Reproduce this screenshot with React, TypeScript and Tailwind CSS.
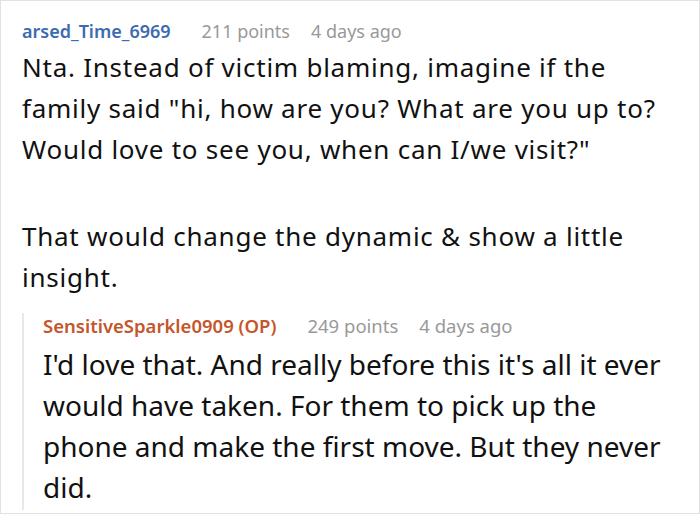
export default function App() {
  return (
    <div className="w-[700px] h-[520px] bg-white" style={{ fontFamily: '"Noto Sans", sans-serif' }}>
      <div className="w-[700px] h-[514px] border border-[#e2e2e2] pl-[21px] pt-[17px]">
        <div className="flex items-baseline text-[18px] leading-[26px]">
          <span className="font-semibold text-[#3d6bb0]">arsed_Time_6969</span>
          <span className="ml-[31px] text-[#999999]">211 points</span>
          <span className="ml-[21px] text-[#999999]">4 days ago</span>
        </div>
        <div className="mt-[3px] text-[26px] leading-[41px] tracking-[0.75px] text-[#111]">
          <p>Nta. Instead of victim blaming, imagine if the<br />family said "hi, how are you? What are you up to?<br />Would love to see you, when can I/we visit?"</p>
          <p className="mt-[46px]">That would change the dynamic &amp; show a little<br />insight.</p>
        </div>
        <div className="mt-[15px] border-l-2 border-[#e8e8e8] pl-[19px] pb-[2px]">
          <div className="flex items-baseline text-[18.5px] leading-[26px]">
            <span className="font-semibold text-[#c5562b]">SensitiveSparkle0909 (OP)</span>
            <span className="ml-[31px] text-[#999999]">249 points</span>
            <span className="ml-[21px] text-[#999999]">4 days ago</span>
          </div>
          <p className="mt-[5px] text-[28px] leading-[41px] text-[#111]">I'd love that. And really before this it's all it ever<br />would have taken. For them to pick up the<br />phone and make the first move. But they never<br />did.</p>
        </div>
      </div>
    </div>
  );
}
